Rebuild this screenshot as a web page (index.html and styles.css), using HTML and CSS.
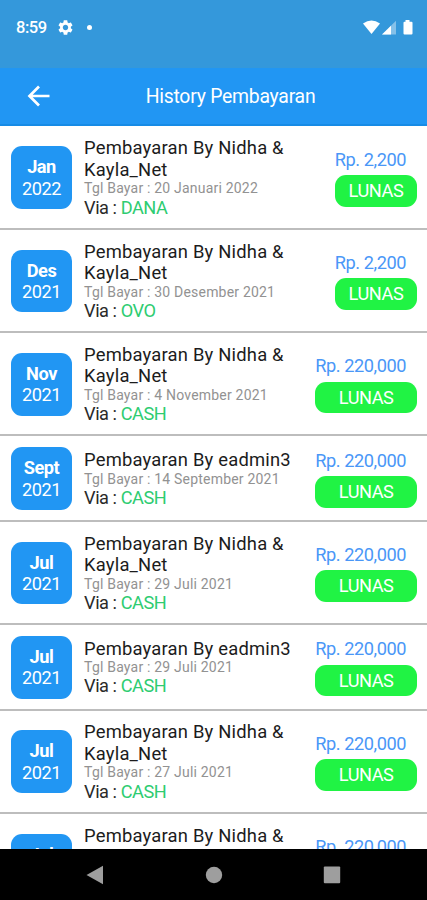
FILE: index.html
```html
<!DOCTYPE html>
<html lang="id">
<head>
    <meta charset="UTF-8">
    <meta name="viewport" content="width=device-width, initial-scale=1.0">
    <title>History Pembayaran</title>
    <link rel="stylesheet" href="styles.css">
</head>
<body>
    <div class="status-bar">
        <span class="time">8:59</span>
        <svg class="gear" viewBox="2 2 20 20"><path fill="#fff" d="M19.14 12.94c.04-.3.06-.61.06-.94 0-.32-.02-.64-.07-.94l2.03-1.58c.18-.14.23-.41.12-.61l-1.92-3.32c-.12-.22-.37-.29-.59-.22l-2.39.96c-.5-.38-1.03-.7-1.62-.94l-.36-2.54c-.04-.24-.24-.41-.48-.41h-3.84c-.24 0-.43.17-.47.41l-.36 2.54c-.59.24-1.13.57-1.62.94l-2.39-.96c-.22-.08-.47 0-.59.22L2.74 8.87c-.12.21-.08.47.12.61l2.03 1.58c-.05.3-.09.63-.09.94s.02.64.07.94l-2.03 1.58c-.18.14-.23.41-.12.61l1.92 3.32c.12.22.37.29.59.22l2.39-.96c.5.38 1.03.7 1.62.94l.36 2.54c.05.24.24.41.48.41h3.84c.24 0 .44-.17.47-.41l.36-2.54c.59-.24 1.13-.56 1.62-.94l2.39.96c.22.08.47 0 .59-.22l1.92-3.32c.12-.22.07-.47-.12-.61l-2.01-1.58zM12 15.6c-1.98 0-3.6-1.62-3.6-3.6s1.62-3.6 3.6-3.6 3.6 1.62 3.6 3.6-1.62 3.6-3.6 3.6z"/></svg>
        <span class="dot"></span>
        <svg class="signals" viewBox="0 0 50 16">
            <path fill="#fff" d="M0 3.6Q8.5-2.6 17 3.6L8.5 14Z"/>
            <path fill="#fff" opacity=".4" d="M19 14.5L33 .8V14.5Z"/>
            <path fill="#fff" d="M19 14.5L28 5.7V14.5Z"/>
            <path fill="#fff" d="M40.5 1.8h2V0h4v1.8h2q1 0 1 1V13.5q0 1-1 1h-7q-1 0-1-1V2.8q0-1 1-1Z"/>
        </svg>
    </div>

    <div class="header">
        <svg class="back" viewBox="0 0 24 22"><path d="M22.5 11H3M12 1.5L2.5 11L12 20.5" fill="none" stroke="#fff" stroke-width="2.7"/></svg>
        <h1>History Pembayaran</h1>
    </div>

    <div class="list">
        <div class="item">
            <div class="date"><b>Jan</b><span>2022</span></div>
            <div class="info">
                <p class="name">Pembayaran By Nidha &amp; Kayla_Net</p>
                <p class="tgl">Tgl Bayar : 20 Januari 2022</p>
                <p class="via">Via : <span>DANA</span></p>
            </div>
            <div class="bill"><span class="price">Rp. 2,200</span><span class="paid">LUNAS</span></div>
        </div>
        <div class="item">
            <div class="date"><b>Des</b><span>2021</span></div>
            <div class="info">
                <p class="name">Pembayaran By Nidha &amp; Kayla_Net</p>
                <p class="tgl">Tgl Bayar : 30 Desember 2021</p>
                <p class="via">Via : <span>OVO</span></p>
            </div>
            <div class="bill"><span class="price">Rp. 2,200</span><span class="paid">LUNAS</span></div>
        </div>
        <div class="item">
            <div class="date"><b>Nov</b><span>2021</span></div>
            <div class="info">
                <p class="name">Pembayaran By Nidha &amp; Kayla_Net</p>
                <p class="tgl">Tgl Bayar : 4 November 2021</p>
                <p class="via">Via : <span>CASH</span></p>
            </div>
            <div class="bill"><span class="price">Rp. 220,000</span><span class="paid">LUNAS</span></div>
        </div>
        <div class="item">
            <div class="date"><b>Sept</b><span>2021</span></div>
            <div class="info">
                <p class="name">Pembayaran By eadmin3</p>
                <p class="tgl">Tgl Bayar : 14 September 2021</p>
                <p class="via">Via : <span>CASH</span></p>
            </div>
            <div class="bill"><span class="price">Rp. 220,000</span><span class="paid">LUNAS</span></div>
        </div>
        <div class="item">
            <div class="date"><b>Jul</b><span>2021</span></div>
            <div class="info">
                <p class="name">Pembayaran By Nidha &amp; Kayla_Net</p>
                <p class="tgl">Tgl Bayar : 29 Juli 2021</p>
                <p class="via">Via : <span>CASH</span></p>
            </div>
            <div class="bill"><span class="price">Rp. 220,000</span><span class="paid">LUNAS</span></div>
        </div>
        <div class="item">
            <div class="date"><b>Jul</b><span>2021</span></div>
            <div class="info">
                <p class="name">Pembayaran By eadmin3</p>
                <p class="tgl">Tgl Bayar : 29 Juli 2021</p>
                <p class="via">Via : <span>CASH</span></p>
            </div>
            <div class="bill"><span class="price">Rp. 220,000</span><span class="paid">LUNAS</span></div>
        </div>
        <div class="item">
            <div class="date"><b>Jul</b><span>2021</span></div>
            <div class="info">
                <p class="name">Pembayaran By Nidha &amp; Kayla_Net</p>
                <p class="tgl">Tgl Bayar : 27 Juli 2021</p>
                <p class="via">Via : <span>CASH</span></p>
            </div>
            <div class="bill"><span class="price">Rp. 220,000</span><span class="paid">LUNAS</span></div>
        </div>
        <div class="item">
            <div class="date"><b>Jul</b><span>2021</span></div>
            <div class="info">
                <p class="name">Pembayaran By Nidha &amp; Kayla_Net</p>
                <p class="tgl">Tgl Bayar : 27 Juli 2021</p>
                <p class="via">Via : <span>CASH</span></p>
            </div>
            <div class="bill"><span class="price">Rp. 220,000</span><span class="paid">LUNAS</span></div>
        </div>
    </div>

    <div class="nav-bar">
        <svg viewBox="0 0 18 20"><path fill="#9e9e9e" d="M17 .8V19.2L.5 10Z"/></svg>
        <svg viewBox="0 0 18 20"><circle cx="9" cy="10" r="8.2" fill="#9e9e9e"/></svg>
        <svg viewBox="0 0 18 20"><rect x=".8" y="1.6" width="16.4" height="16.6" rx="1" fill="#9e9e9e"/></svg>
    </div>
</body>
</html>
```
FILE: styles.css
```css
* {
  box-sizing: border-box;
}

body {
  margin: 0;
  height: 900px;
  display: flex;
  flex-direction: column;
  overflow: hidden;
  background: #fff;
  font-family: Roboto, "Liberation Sans", sans-serif;
  font-size: 18.2px;
  line-height: 21.45px;
  letter-spacing: -.45px;
}

/* Status bar */
.status-bar {
  flex: none;
  height: 68px;
  padding: 0 14px 13px 16px;
  display: flex;
  align-items: center;
  background: #3498db;
  color: #fff;
}

.time {
  width: 42px;
  padding-top: 1px;
  font-size: 16.5px;
  font-weight: 500;
}

.gear {
  width: 15px;
  height: 15px;
}

.dot {
  width: 5px;
  height: 5px;
  margin-left: 14px;
  border-radius: 50%;
  background: #fff;
}

.signals {
  width: 50px;
  height: 16px;
  margin-left: auto;
}

/* Header */
.header {
  flex: none;
  height: 58px;
  padding: 0 27px;
  display: grid;
  grid-template-columns: 24px 1fr 24px;
  align-items: center;
  background: #2196f3;
  border-bottom: 2px solid #168be6;
  color: #fff;
}

.back {
  width: 24px;
  height: 22px;
}

.header h1 {
  margin: 0;
  padding: 2px 0 0 34px;
  text-align: center;
  font-size: 19.4px;
  font-weight: 400;
  letter-spacing: -.25px;
}

/* Payment list */
.list {
  flex: 1;
  min-height: 0;
  padding-top: .6px;
  overflow: hidden;
}

.item {
  padding: 10.9px 10px 9.8px 11px;
  display: flex;
  align-items: center;
  border-bottom: 2px solid #bdbdbd;
}

.date {
  flex: none;
  width: 61px;
  height: 62.8px;
  display: flex;
  flex-direction: column;
  align-items: center;
  justify-content: center;
  border-radius: 11px;
  background: #2196f3;
  color: #fff;
}

.info {
  flex: 1;
  margin-left: 12px;
}

.info p {
  margin: 0;
}

.info .name {
  max-width: 215px;
  color: #1c1c1c;
  font-size: 18.4px;
  letter-spacing: .2px;
}

.info .tgl {
  color: #929292;
  font-size: 14px;
  line-height: 16.2px;
  letter-spacing: .2px;
}

.via {
  color: #2a2a2a;
}

.via span {
  color: #2ecc71;
}

.bill {
  flex: none;
  display: flex;
  flex-direction: column;
}

.price {
  margin: 0 11px 5px 0;
  color: #4a97f7;
}

.paid {
  height: 31.5px;
  line-height: 31.5px;
  border-radius: 11px;
  background: #20f344;
  color: #fff;
  text-align: center;
}

/* Android navigation */
.nav-bar {
  flex: none;
  height: 51px;
  padding: 0 86px;
  display: flex;
  align-items: center;
  justify-content: space-between;
  background: #000;
}

.nav-bar svg {
  width: 18px;
  height: 20px;
}
```
